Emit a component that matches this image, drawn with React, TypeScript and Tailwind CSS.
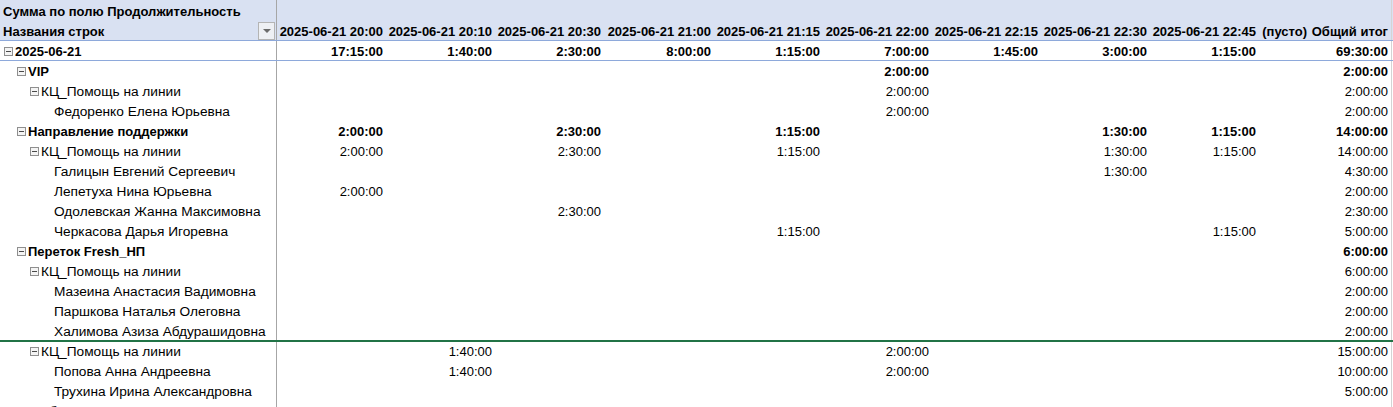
import React from "react";

type Row = {
  label: string;
  level: number;
  bold?: boolean;
  icon?: boolean;
  vals: Record<number, string>;
  top?: "blue" | "green";
};

const headers = [
  "2025-06-21 20:00",
  "2025-06-21 20:10",
  "2025-06-21 20:30",
  "2025-06-21 21:00",
  "2025-06-21 21:15",
  "2025-06-21 22:00",
  "2025-06-21 22:15",
  "2025-06-21 22:30",
  "2025-06-21 22:45",
  "(пусто)",
  "Общий итог",
];

const rows: Row[] = [
  {
    label: "2025-06-21",
    level: 0,
    bold: true,
    icon: true,
    top: "blue",
    vals: { 0: "17:15:00", 1: "1:40:00", 2: "2:30:00", 3: "8:00:00", 4: "1:15:00", 5: "7:00:00", 6: "1:45:00", 7: "3:00:00", 8: "1:15:00", 10: "69:30:00" },
  },
  { label: "VIP", level: 1, bold: true, icon: true, top: "blue", vals: { 5: "2:00:00", 10: "2:00:00" } },
  { label: "КЦ_Помощь на линии", level: 2, icon: true, vals: { 5: "2:00:00", 10: "2:00:00" } },
  { label: "Федоренко Елена Юрьевна", level: 3, vals: { 5: "2:00:00", 10: "2:00:00" } },
  {
    label: "Направление поддержки",
    level: 1,
    bold: true,
    icon: true,
    vals: { 0: "2:00:00", 2: "2:30:00", 4: "1:15:00", 7: "1:30:00", 8: "1:15:00", 10: "14:00:00" },
  },
  {
    label: "КЦ_Помощь на линии",
    level: 2,
    icon: true,
    vals: { 0: "2:00:00", 2: "2:30:00", 4: "1:15:00", 7: "1:30:00", 8: "1:15:00", 10: "14:00:00" },
  },
  { label: "Галицын Евгений Сергеевич", level: 3, vals: { 7: "1:30:00", 10: "4:30:00" } },
  { label: "Лепетуха Нина Юрьевна", level: 3, vals: { 0: "2:00:00", 10: "2:00:00" } },
  { label: "Одолевская Жанна Максимовна", level: 3, vals: { 2: "2:30:00", 10: "2:30:00" } },
  { label: "Черкасова Дарья Игоревна", level: 3, vals: { 4: "1:15:00", 8: "1:15:00", 10: "5:00:00" } },
  { label: "Переток Fresh_НП", level: 1, bold: true, icon: true, vals: { 10: "6:00:00" } },
  { label: "КЦ_Помощь на линии", level: 2, icon: true, vals: { 10: "6:00:00" } },
  { label: "Мазеина Анастасия Вадимовна", level: 3, vals: { 10: "2:00:00" } },
  { label: "Паршкова Наталья Олеговна", level: 3, vals: { 10: "2:00:00" } },
  { label: "Халимова Азиза Абдурашидовна", level: 3, vals: { 10: "2:00:00" } },
  { label: "КЦ_Помощь на линии", level: 2, icon: true, top: "green", vals: { 1: "1:40:00", 5: "2:00:00", 10: "15:00:00" } },
  { label: "Попова Анна Андреевна", level: 3, vals: { 1: "1:40:00", 5: "2:00:00", 10: "10:00:00" } },
  { label: "Трухина Ирина Александровна", level: 3, vals: { 10: "5:00:00" } },
  { label: "Служба поддержки", level: 0, bold: true, icon: true, vals: {} },
];

const gridCols =
  "grid grid-cols-[277px_109px_109px_109px_110px_109px_109px_109px_109px_109px_51px_82px]";

const indent = ["pl-[4px]", "pl-[17px]", "pl-[30px]", "pl-[54px]"];

function Toggle() {
  return (
    <span className="mr-[2px] inline-flex h-[9px] w-[9px] shrink-0 items-center justify-center border border-[#8f8f8f] bg-[#f4f4f4]">
      <span className="h-px w-[5px] bg-[#4a4a4a]" />
    </span>
  );
}

export default function App() {
  return (
    <div
      className="h-[407px] w-[1393px] overflow-hidden bg-white text-[13px] leading-[17px] text-black"
      style={{ fontFamily: "'Liberation Sans', Arial, sans-serif" }}
    >
      {/* header row 1 */}
      <div className={`${gridCols} h-[20px] bg-[#d9e1f2]`}>
        <div className="flex h-[20px] items-end whitespace-nowrap border-r border-[#a6a6a6] pl-[3px] font-bold">
          Сумма по полю Продолжительность
        </div>
        {headers.map((_, i) => (
          <div key={i} className={i === 10 ? "border-r border-[#d4d4d4]" : ""} />
        ))}
      </div>
      {/* header row 2 */}
      <div className={`${gridCols} h-[20px] bg-[#d9e1f2] font-bold`}>
        <div className="flex h-[20px] items-end justify-between border-r border-[#a6a6a6] pl-[3px]">
          <span className="whitespace-nowrap">Названия строк</span>
          <span className="mb-[0px] mr-[1px] flex h-[18px] w-[17px] items-center justify-center border border-[#b4b4b4] bg-[#eef0f4]">
            <svg width="8" height="4" viewBox="0 0 8 4">
              <path d="M0 0 H8 L4 4 Z" fill="#6b6b6b" />
            </svg>
          </span>
        </div>
        {headers.map((h, i) => (
          <div
            key={i}
            className={`flex h-[20px] items-end justify-end whitespace-nowrap pr-[3px] ${
              i === 10 ? "border-r border-[#d4d4d4]" : ""
            }`}
          >
            {h}
          </div>
        ))}
      </div>
      {rows.map((r, ri) => {
        const topCls =
          r.top === "blue"
            ? "border-t border-[#8ea9db]"
            : r.top === "green"
            ? "border-t-2 border-[#217346]"
            : "";
        return (
          <div key={ri} className={`${gridCols} h-[20px] ${topCls} ${r.bold ? "font-bold" : ""}`}>
            <div className={`flex items-end whitespace-nowrap border-r border-[#a6a6a6] ${indent[r.level]}`}>
              {r.icon && (
                <span className="mb-[4px] flex">
                  <Toggle />
                </span>
              )}
              <span className={r.bold ? "" : "text-[13.7px]"}>{r.label}</span>
            </div>
            {headers.map((_, i) => (
              <div
                key={i}
                className={`flex items-end justify-end whitespace-nowrap pr-[3px] ${
                  i === 10 ? "border-r border-[#d4d4d4]" : ""
                }`}
              >
                {r.vals[i] ?? ""}
              </div>
            ))}
          </div>
        );
      })}
    </div>
  );
}
